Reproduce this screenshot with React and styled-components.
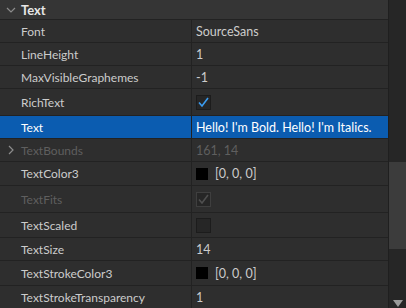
import React from "react";
import styled, { createGlobalStyle } from "styled-components";

const Global = createGlobalStyle`
  html, body { margin: 0; padding: 0; background: #2e2e2e; }
  * { box-sizing: border-box; }
`;

const Frame = styled.div`
  width: 406px;
  height: 308px;
  display: flex;
  overflow: hidden;
  background: #2e2e2e;
  font-family: Lato, "Noto Sans", sans-serif;
  font-size: 12px;
  color: #cccccc;
`;

const Panel = styled.div`
  flex: 1;
  display: flex;
  flex-direction: column;
  min-width: 0;
`;

const Header = styled.div`
  height: 20px;
  flex: none;
  display: flex;
  align-items: center;
  background: #353535;
  border-bottom: 1px solid #222222;
  color: #e6e6e6;
  font-weight: 700;
  font-size: 13px;
`;

const Chevron = styled.span`
  width: 21px;
  display: flex;
  justify-content: center;
  align-items: center;
`;

const Row = styled.div`
  height: ${(p) => p.$h}px;
  flex: none;
  display: grid;
  grid-template-columns: 192px 1fr;
  background: ${(p) => (p.$selected ? "#0b5cb0" : "transparent")};
  color: ${(p) => (p.$selected ? "#ffffff" : p.$disabled ? "#5f5f5f" : "#cccccc")};
`;

const NameCell = styled.div`
  display: flex;
  align-items: center;
  border-bottom: 1px solid #222222;
  border-right: 1px solid #222222;
  white-space: nowrap;
`;

const ValueCell = styled.div`
  display: flex;
  align-items: center;
  gap: 7px;
  padding-left: 4px;
  font-size: 12.5px;
  border-bottom: 1px solid #222222;
  white-space: nowrap;
`;

const Check = styled.span`
  width: 15px;
  height: 15px;
  display: flex;
  align-items: center;
  justify-content: center;
  background: #262626;
  border: 1px solid ${(p) => (p.$disabled ? "#3f3f3f" : "#1c1c1c")};
`;

const Swatch = styled.span`
  width: 12px;
  height: 12px;
  background: #000;
`;

const Scrollbar = styled.div`
  width: 18px;
  flex: none;
  display: flex;
  flex-direction: column;
  background: #262626;
  border-left: 1px solid #1f1f1f;
`;

const Track = styled.div`
  height: ${(p) => p.$h}px;
  flex: none;
`;

const Thumb = styled.div`
  height: 87px;
  flex: none;
  background: #3c3c3c;
`;

const Arrow = styled.div`
  margin-top: auto;
  height: 12px;
  display: flex;
  justify-content: center;
  align-items: flex-end;
`;

const CheckIcon = ({ color }) => (
  <svg width="13" height="13" viewBox="0 0 13 13">
    <polyline points="2,6.5 5,10 11,2" fill="none" stroke={color} strokeWidth="1.6" />
  </svg>
);

const rows = [
  { name: "Font", value: "SourceSans", h: 23 },
  { name: "LineHeight", value: "1", h: 23 },
  { name: "MaxVisibleGraphemes", value: "-1", h: 23 },
  { name: "RichText", check: "on", h: 27 },
  { name: "Text", value: "Hello! I'm Bold. Hello! I'm Italics.", h: 23, selected: true },
  { name: "TextBounds", value: "161, 14", h: 23, disabled: true, expand: true },
  { name: "TextColor3", color: "[0, 0, 0]", h: 24 },
  { name: "TextFits", check: "disabled", h: 27, disabled: true },
  { name: "TextScaled", check: "off", h: 25 },
  { name: "TextSize", value: "14", h: 23 },
  { name: "TextStrokeColor3", color: "[0, 0, 0]", h: 25 },
  { name: "TextStrokeTransparency", value: "1", h: 23 },
];

export default function App() {
  return (
    <>
      <Global />
      <Frame>
        <Panel>
          <Header>
            <Chevron>
              <svg width="10" height="6" viewBox="0 0 10 6">
                <polyline points="1,1 5,5 9,1" fill="none" stroke="#8c8c8c" strokeWidth="1.2" />
              </svg>
            </Chevron>
            Text
          </Header>
          {rows.map((r) => (
            <Row key={r.name} $h={r.h} $selected={r.selected} $disabled={r.disabled}>
              <NameCell>
                <Chevron>
                  {r.expand && (
                    <svg width="6" height="10" viewBox="0 0 6 10">
                      <polyline points="1,1 5,5 1,9" fill="none" stroke="#8c8c8c" strokeWidth="1.2" />
                    </svg>
                  )}
                </Chevron>
                {r.name}
              </NameCell>
              <ValueCell>
                {r.value}
                {r.check && (
                  <Check $disabled={r.check === "disabled"}>
                    {r.check === "on" && <CheckIcon color="#3b9cf0" />}
                    {r.check === "disabled" && <CheckIcon color="#4f4f4f" />}
                  </Check>
                )}
                {r.color && (
                  <>
                    <Swatch />
                    {r.color}
                  </>
                )}
              </ValueCell>
            </Row>
          ))}
        </Panel>
        <Scrollbar>
          <Track $h={162} />
          <Thumb />
          <Arrow>
            <svg width="10" height="8" viewBox="0 0 10 8">
              <polygon points="0,0 10,0 5,7" fill="#9a9a9a" />
            </svg>
          </Arrow>
        </Scrollbar>
      </Frame>
    </>
  );
}
